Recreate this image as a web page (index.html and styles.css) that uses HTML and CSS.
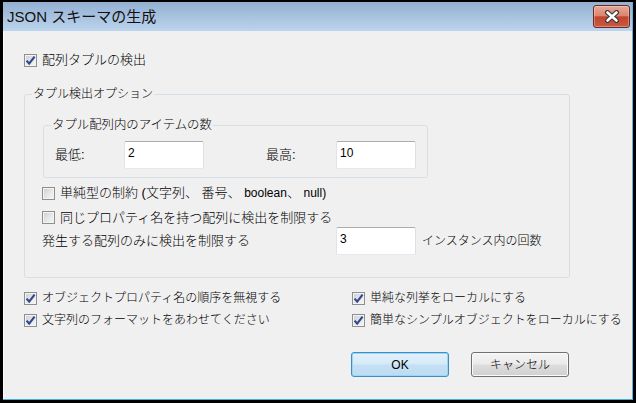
FILE: index.html
```html
<!DOCTYPE html>
<html lang="ja">
<head>
<meta charset="utf-8">
<title>JSON スキーマの生成</title>
<link rel="stylesheet" href="styles.css">
</head>
<body>
<div class="screen">
  <div class="window">
    <div class="titlebar">
      <span class="title">JSON スキーマの生成</span>
      <span class="close">
        <svg width="16" height="13" viewBox="0 0 16 13">
          <path d="M3.5 2.5 L12.5 10.5 M12.5 2.5 L3.5 10.5" stroke="#3b3b3b" stroke-width="5" stroke-linecap="round"/>
          <path d="M3.5 2.5 L12.5 10.5 M12.5 2.5 L3.5 10.5" stroke="#ffffff" stroke-width="2.6" stroke-linecap="round"/>
        </svg>
      </span>
    </div>
    <div class="client">
      <div class="cb-row">
        <span class="cb"><svg class="tick" width="11" height="11" viewBox="0 0 11 11"><path d="M1.6 5.6 L4.2 8.6 L9.6 1.6" fill="none" stroke="#33478c" stroke-width="2.2"/></svg></span>
        <span>配列タプルの検出</span>
      </div>

      <fieldset class="group outer">
        <legend>タプル検出オプション</legend>
        <div class="outer-body">
          <fieldset class="group inner">
            <legend>タプル配列内のアイテムの数</legend>
            <div class="range-row">
              <span class="lbl">最低:</span>
              <span class="field">2</span>
              <span class="lbl lbl2">最高:</span>
              <span class="field">10</span>
            </div>
          </fieldset>
          <div class="cb-row sub sub1">
            <span class="cb"></span>
            <span>単純型の制約 (文字列、 番号、 <span class="lat">boolean</span>、 <span class="lat">null)</span></span>
          </div>
          <div class="cb-row sub sub2">
            <span class="cb"></span>
            <span>同じプロパティ名を持つ配列に検出を制限する</span>
          </div>
          <div class="occ-row">
            <span class="occ-label">発生する配列のみに検出を制限する</span>
            <span class="field">3</span>
            <span class="suffix">インスタンス内の回数</span>
          </div>
        </div>
      </fieldset>

      <div class="options">
        <div class="cb-row">
          <span class="cb"><svg class="tick" width="11" height="11" viewBox="0 0 11 11"><path d="M1.6 5.6 L4.2 8.6 L9.6 1.6" fill="none" stroke="#33478c" stroke-width="2.2"/></svg></span>
          <span>オブジェクトプロパティ名の順序を無視する</span>
        </div>
        <div class="cb-row">
          <span class="cb"><svg class="tick" width="11" height="11" viewBox="0 0 11 11"><path d="M1.6 5.6 L4.2 8.6 L9.6 1.6" fill="none" stroke="#33478c" stroke-width="2.2"/></svg></span>
          <span>単純な列挙をローカルにする</span>
        </div>
        <div class="cb-row">
          <span class="cb"><svg class="tick" width="11" height="11" viewBox="0 0 11 11"><path d="M1.6 5.6 L4.2 8.6 L9.6 1.6" fill="none" stroke="#33478c" stroke-width="2.2"/></svg></span>
          <span>文字列のフォーマットをあわせてください</span>
        </div>
        <div class="cb-row">
          <span class="cb"><svg class="tick" width="11" height="11" viewBox="0 0 11 11"><path d="M1.6 5.6 L4.2 8.6 L9.6 1.6" fill="none" stroke="#33478c" stroke-width="2.2"/></svg></span>
          <span>簡単なシンプルオブジェクトをローカルにする</span>
        </div>
      </div>

      <div class="buttons">
        <div class="btn btn-ok"><span class="lat">OK</span></div>
        <div class="btn btn-cancel">キャンセル</div>
      </div>
    </div>
  </div>
</div>
</body>
</html>
```

FILE: styles.css
```css
html, body {
  margin: 0;
  padding: 0;
  background: #000;
}

.screen {
  width: 636px;
  height: 403px;
  box-sizing: border-box;
  padding: 2px 3px 3px 3px;
  background: #000;
  display: flex;
  overflow: hidden;
}

.window {
  flex: 1;
  min-width: 0;
  display: flex;
  flex-direction: column;
  border-right: 1px solid #5ab3e0;
  border-bottom: 1px solid #3fb2e6;
  overflow: hidden;
}

.titlebar {
  flex: none;
  height: 29px;
  display: flex;
  justify-content: space-between;
  align-items: flex-start;
  padding: 0 2px 0 4px;
  background: linear-gradient(#93b0d1, #bcd4ed);
}

.title {
  font-family: "Liberation Sans", "Noto Sans CJK JP", sans-serif;
  font-size: 15px;
  line-height: 28px;
  padding-top: 1px;
  color: #111;
}

.close {
  margin-top: 3px;
  width: 37px;
  height: 23px;
  box-sizing: border-box;
  border: 1px solid #6a2a22;
  border-radius: 3px;
  background: linear-gradient(#e8a797 0%, #db8670 46%, #c3442c 52%, #c85a44 100%);
  box-shadow: inset 0 0 0 1px rgba(255, 255, 255, 0.3);
  display: flex;
  align-items: center;
  justify-content: center;
}

.close svg {
  display: block;
}

.client {
  flex: 1;
  min-width: 0;
  background: #f0f0f0;
  border-left: 1px solid #fbfbfb;
  padding: 19px 0 0 20px;
  font-family: "Liberation Sans", "Noto Sans CJK JP", sans-serif;
  font-size: 13px;
  font-weight: 300;
  line-height: 16px;
  color: #000;
}

.lat {
  font-size: 12px;
  font-weight: 400;
}

.cb-row {
  display: flex;
  align-items: center;
  gap: 5px;
  height: 20px;
  white-space: nowrap;
}

.cb {
  flex: none;
  width: 13px;
  height: 13px;
  box-sizing: border-box;
  border: 1px solid #8e8f8f;
  background: linear-gradient(135deg, #cbced3 0%, #e6e7e9 55%, #f8f8f8 100%);
  box-shadow: inset 0 0 0 1px #f3f3f3;
}

.cb .tick {
  display: block;
}

fieldset.group {
  margin: 0;
  padding: 0;
  min-width: 0;
  border: 1px solid #d5dfe5;
  border-radius: 3px;
  box-sizing: border-box;
}

fieldset.group legend {
  margin-left: 7px;
  padding: 0 1px;
  line-height: 16px;
  font-size: 12px;
}

fieldset.inner legend {
  font-size: 12.4px;
}

fieldset.outer {
  width: 546px;
  margin-top: 16px;
}

.outer-body {
  padding: 15px 0 22px 0;
}

fieldset.inner {
  width: 385px;
  margin-left: 18px;
}

.range-row {
  display: flex;
  align-items: center;
  height: 28px;
  margin: 8px 0 8px 11px;
}

.lbl {
  width: 69px;
}

.lbl2 {
  margin-left: 62px;
  width: 70px;
}

.field {
  flex: none;
  width: 80px;
  height: 28px;
  box-sizing: border-box;
  background: #fff;
  border: 1px solid #d6dbe3;
  border-top-color: #abadb3;
  border-left-color: #e2e3ea;
  border-right-color: #dbdfe6;
  border-bottom-color: #e3e9ef;
  border-radius: 2px;
  padding: 4px 0 0 3px;
  font-size: 12px;
  font-weight: 400;
  line-height: 14px;
}

.sub {
  margin-left: 17px;
}

.sub1 {
  margin-top: 5px;
}

.sub2 {
  margin-top: 5px;
  height: 19px;
}

.occ-row {
  display: flex;
  align-items: center;
  height: 28px;
  margin-left: 17px;
  white-space: nowrap;
}

.occ-label {
  width: 294px;
}

.suffix {
  margin-left: 6px;
  font-size: 12px;
}

.options {
  display: grid;
  grid-template-columns: 328px auto;
  grid-auto-rows: 22px;
  margin-top: 9px;
  font-size: 12px;
}

.options .cb-row {
  height: 22px;
}

.buttons {
  display: flex;
  gap: 22px;
  margin: 21px 0 0 327px;
}

.btn {
  width: 98px;
  height: 25px;
  box-sizing: border-box;
  border-radius: 3px;
  display: flex;
  align-items: center;
  justify-content: center;
  font-size: 12px;
}

.btn-ok {
  border: 1px solid #3c8dc8;
  background: linear-gradient(#e3f1fb 0%, #d5eaf8 48%, #c4e0f4 52%, #bddbf1 100%);
  box-shadow: inset 0 0 0 1px #9bd7f5;
}

.btn-cancel {
  border: 1px solid #707070;
  background: linear-gradient(#f3f3f3 0%, #ebebeb 48%, #dddddd 52%, #d0d0d0 100%);
  box-shadow: inset 0 0 0 1px #fbfbfb;
}
```
